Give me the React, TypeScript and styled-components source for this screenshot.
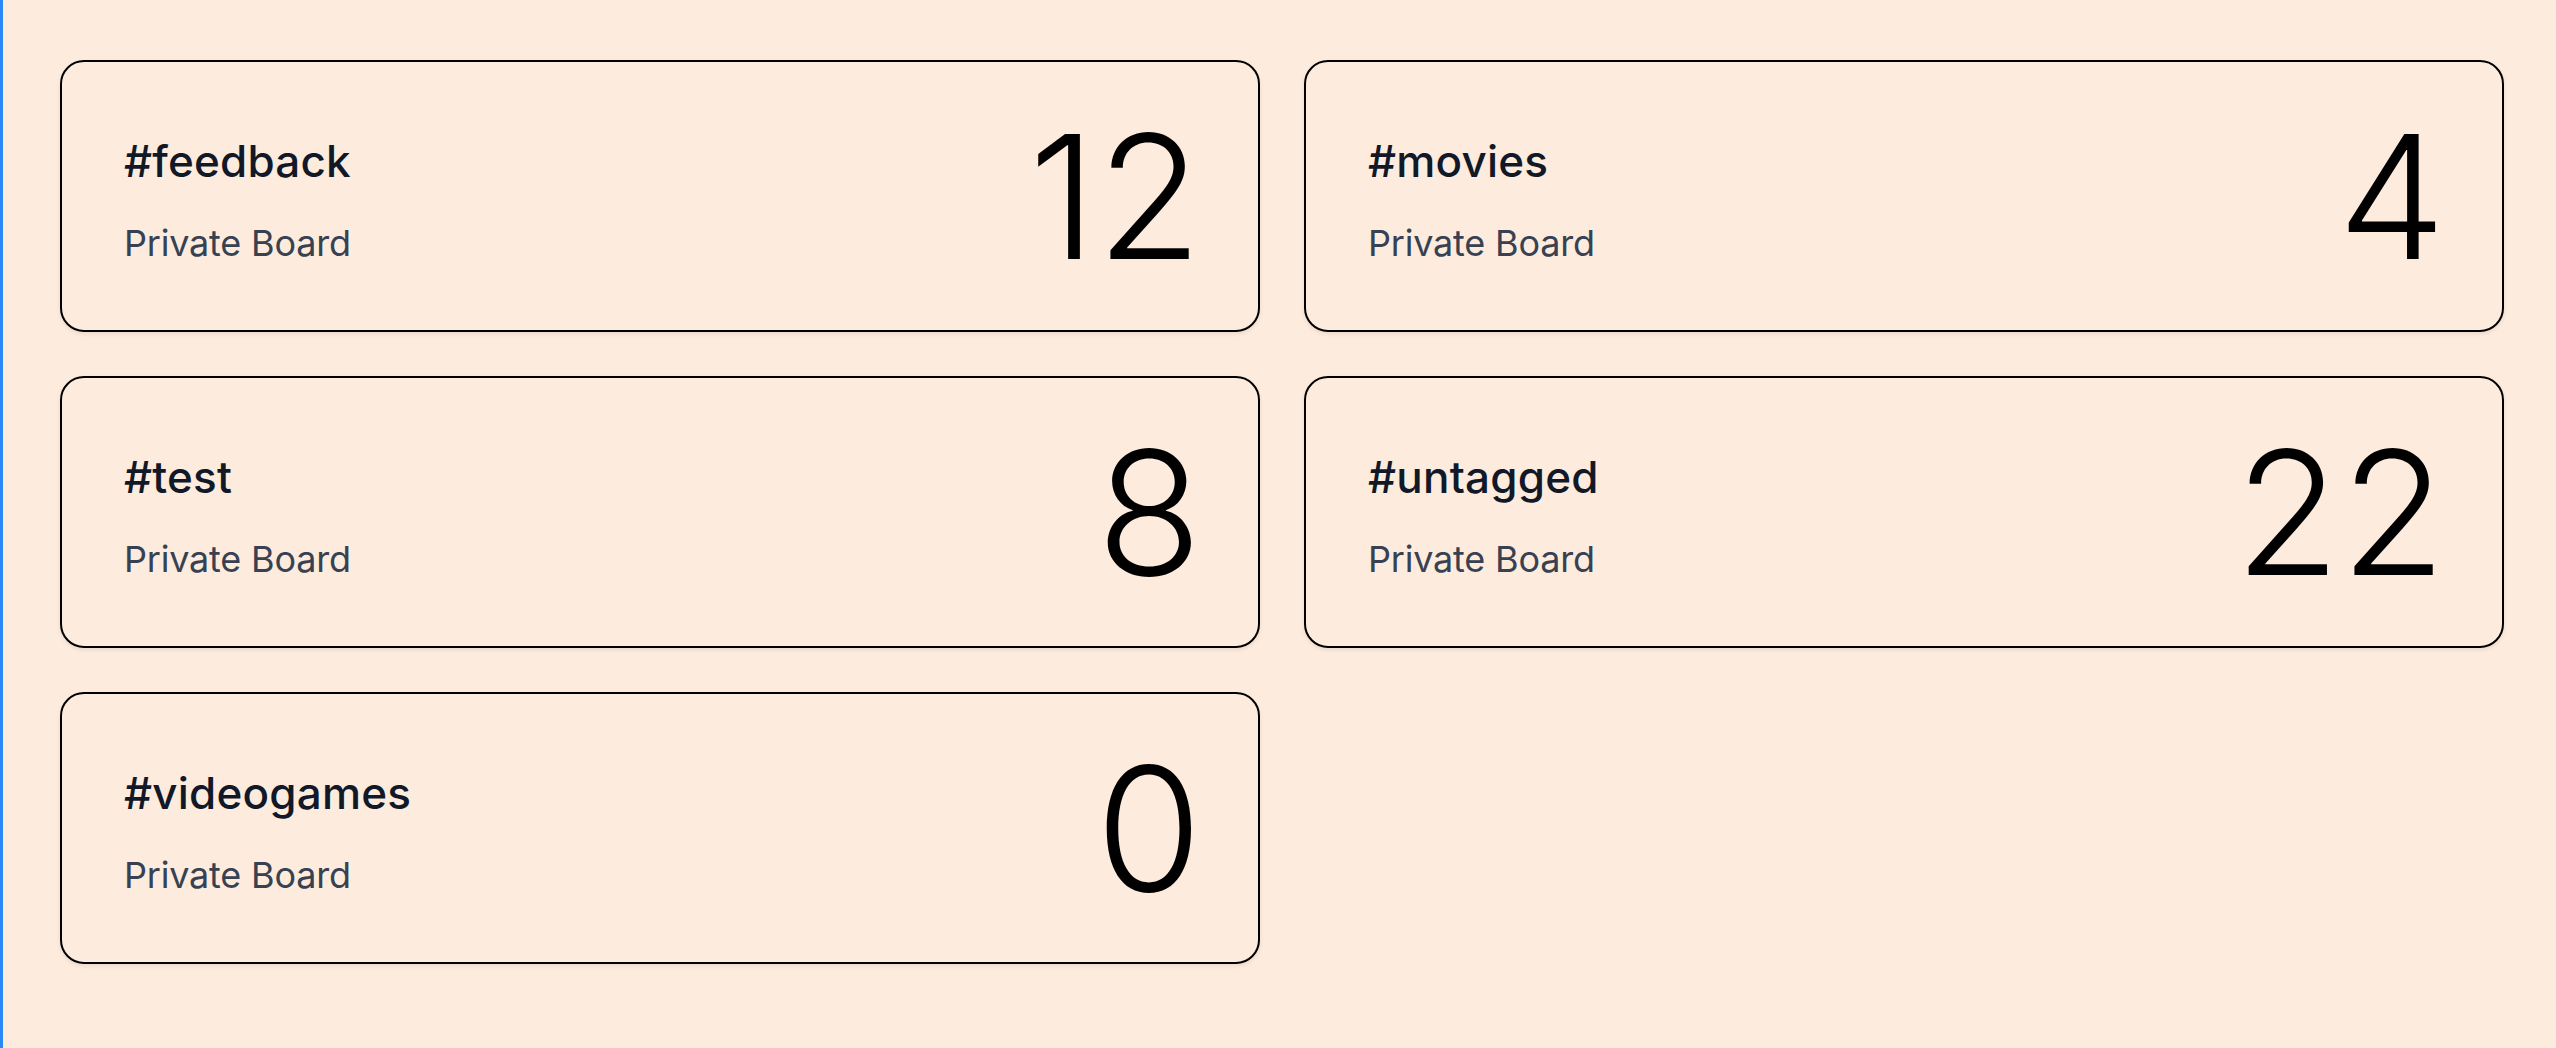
import React from "react";
import styled, { createGlobalStyle } from "styled-components";

const GlobalStyle = createGlobalStyle`
  html, body {
    margin: 0;
    padding: 0;
    background: #fdebdd;
  }
  body {
    font-family: Inter, "Noto Sans", "Liberation Sans", sans-serif;
    -webkit-font-smoothing: antialiased;
  }
`;

const Page = styled.main`
  min-height: 100vh;
  box-sizing: border-box;
  border-left: 3px solid #2a88f7;
  padding: 60px 52px 60px 57px;
`;

const Grid = styled.div`
  display: grid;
  grid-template-columns: repeat(2, 1200px);
  column-gap: 44px;
  row-gap: 44px;
`;

const Card = styled.div`
  box-sizing: border-box;
  height: 272px;
  border: 2.5px solid #000;
  border-radius: 24px;
  padding: 0 56px 0 62px;
  display: flex;
  align-items: center;
  justify-content: space-between;
  box-shadow: 0 2px 4px rgba(0, 0, 0, 0.08);
`;

const Info = styled.div`
  display: flex;
  flex-direction: column;
  gap: 30px;
  padding-top: 8px;
`;

const Title = styled.div`
  font-size: 44px;
  line-height: 56px;
  font-weight: 500;
  color: #111827;
  letter-spacing: 0.2px;
`;

const Subtitle = styled.div`
  font-size: 36px;
  line-height: 48px;
  font-weight: 400;
  color: #374151;
  letter-spacing: -0.2px;
`;

const Count = styled.div`
  font-size: 172px;
  line-height: 1;
  font-weight: 300;
  color: #000;
`;

const boards = [
  { tag: "#feedback", count: 12 },
  { tag: "#movies", count: 4 },
  { tag: "#test", count: 8 },
  { tag: "#untagged", count: 22 },
  { tag: "#videogames", count: 0 },
];

export default function App() {
  return (
    <>
      <GlobalStyle />
      <Page>
        <Grid>
          {boards.map((b) => (
            <Card key={b.tag}>
              <Info>
                <Title>{b.tag}</Title>
                <Subtitle>Private Board</Subtitle>
              </Info>
              <Count>{b.count}</Count>
            </Card>
          ))}
        </Grid>
      </Page>
    </>
  );
}
